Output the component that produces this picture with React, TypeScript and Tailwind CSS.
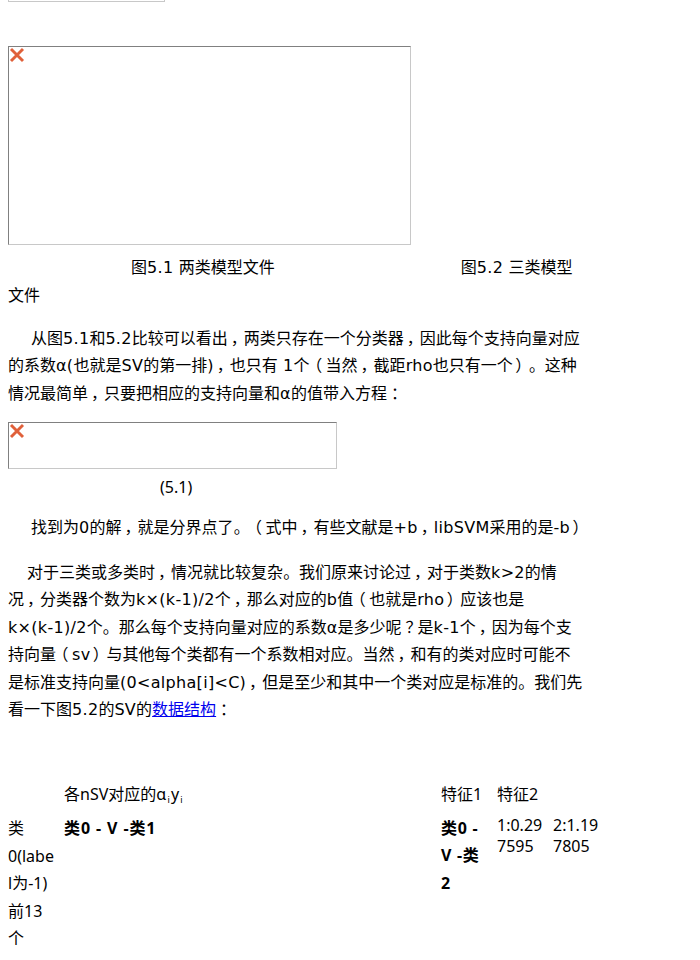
const bodyFont = { fontFamily: '"DejaVu Sans", "Noto Sans CJK SC", sans-serif' };
const tableFont = { fontFamily: '"Noto Sans", "Noto Sans CJK SC", sans-serif' };

function BrokenImage({ className }: { className: string }) {
  return (
    <div className={`border border-t-[#808080] border-l-[#808080] border-r-[#c8c8c8] border-b-[#c8c8c8] ${className}`}>
      <svg width="16" height="16" viewBox="0 0 16 16" className="block">
        <path d="M2 2 L14 14 M14 2 L2 14" stroke="#e0603a" strokeWidth="2.9" fill="none" />
      </svg>
    </div>
  );
}

// full-width punctuation sits centred in its em box, latin runs are a touch wider
function Zh({ text }: { text: string }) {
  return (
    <>
      {text.split(/([，。（）：？]|[A-Za-z0-9.()\[\]<>+×\/α -]+)/).map((part, i) => {
        if (i % 2 === 0) return part;
        if (part === "。") {
          return (
            <span key={i} className="inline-block w-4 indent-0 text-left [font-feature-settings:'palt']">
              {part}
            </span>
          );
        }
        if (part === "）") {
          return (
            <span key={i} className="inline-block w-4 pr-[2px] indent-0 text-center [font-feature-settings:'palt']">
              {part}
            </span>
          );
        }
        if (/[，（：？]/.test(part)) {
          return (
            <span key={i} className="inline-block w-4 indent-0 text-center [font-feature-settings:'palt']">
              {part}
            </span>
          );
        }
        return (
          <span key={i} className="tracking-[0.3px]">
            {part}
          </span>
        );
      })}
    </>
  );
}

export default function App() {
  return (
    <div className="h-[960px] overflow-hidden bg-white text-[16px] leading-[27.4px] text-black" style={bodyFont}>
      <div className="ml-2 h-[2px] w-[157px] border border-t-0 border-[#c8c8c8]" />
      <div className="mx-2 w-[590px]">
        <BrokenImage className="mt-[44px] h-[199px] w-[403px]" />
        <p className="mt-[9px] leading-[28px]">
          <span className="pl-[123px]">
            <Zh text="图5.1 两类模型文件" />
          </span>
          <span className="pl-[186px]">
            <Zh text="图5.2 三类模型" />
          </span>
          <br />
          文件
        </p>
        <p className="mt-[15px] indent-[23px]">
          <Zh text="从图5.1和5.2比较可以看出，两类只存在一个分类器，因此每个支持向量对应" />
          <br />
          <Zh text="的系数α(也就是SV的第一排)，也只有 1个（当然，截距rho也只有一个）。这种" />
          <br />
          <Zh text="情况最简单，只要把相应的支持向量和α的值带入方程：" />
        </p>
        <BrokenImage className="mt-[15px] h-[47px] w-[329px]" />
        <p className="mt-[5px] pl-[152px]" style={tableFont}>(5.1)</p>
        <p className="mt-[12px] pl-[23px]">
          <Zh text="找到为0的解，就是分界点了。（式中，有些文献是+b，libSVM采用的是-b）" />
        </p>
        <p className="mt-[18px] indent-[19px]">
          <Zh text="对于三类或多类时，情况就比较复杂。我们原来讨论过，对于类数k>2的情" />
          <br />
          <Zh text="况，分类器个数为k×(k-1)/2个，那么对应的b值（也就是rho）应该也是" />
          <br />
          <Zh text="k×(k-1)/2个。那么每个支持向量对应的系数α是多少呢？是k-1个，因为每个支" />
          <br />
          <Zh text="持向量（sv）与其他每个类都有一个系数相对应。当然，和有的类对应时可能不" />
          <br />
          <Zh text="是标准支持向量(0<alpha[i]<C)，但是至少和其中一个类对应是标准的。我们先" />
          <br />
          <Zh text="看一下图5.2的SV的" />
          <a href="#" className="text-[#0000ee] underline">数据结构</a>
          <Zh text="：" />
        </p>
        <div className="mt-[58px] grid w-[600px] grid-cols-[48px_369px_48px_48px_48px] gap-x-2" style={tableFont}>
          <div />
          <div>
            各nSV对应的
            <span className="tracking-[1.2px]">
              α<sub className="text-[9px]">i</sub>y<sub className="text-[9px]">i</sub>
            </span>
          </div>
          <div>特征1</div>
          <div className="col-span-2">特征2</div>
          <div className="pt-[6.5px] [overflow-wrap:anywhere]">类0(label为-1)前13个</div>
          <div className="pt-[6px] font-bold tracking-[0.9px]">类0 - V -类1</div>
          <div className="pt-[6px] font-bold tracking-[0.7px]">类0 - V -类2</div>
          <div className="pt-[6px] leading-[21px] [overflow-wrap:anywhere]">1:0.297595</div>
          <div className="pt-[6px] leading-[21px] [overflow-wrap:anywhere]">2:1.197805</div>
        </div>
      </div>
    </div>
  );
}
